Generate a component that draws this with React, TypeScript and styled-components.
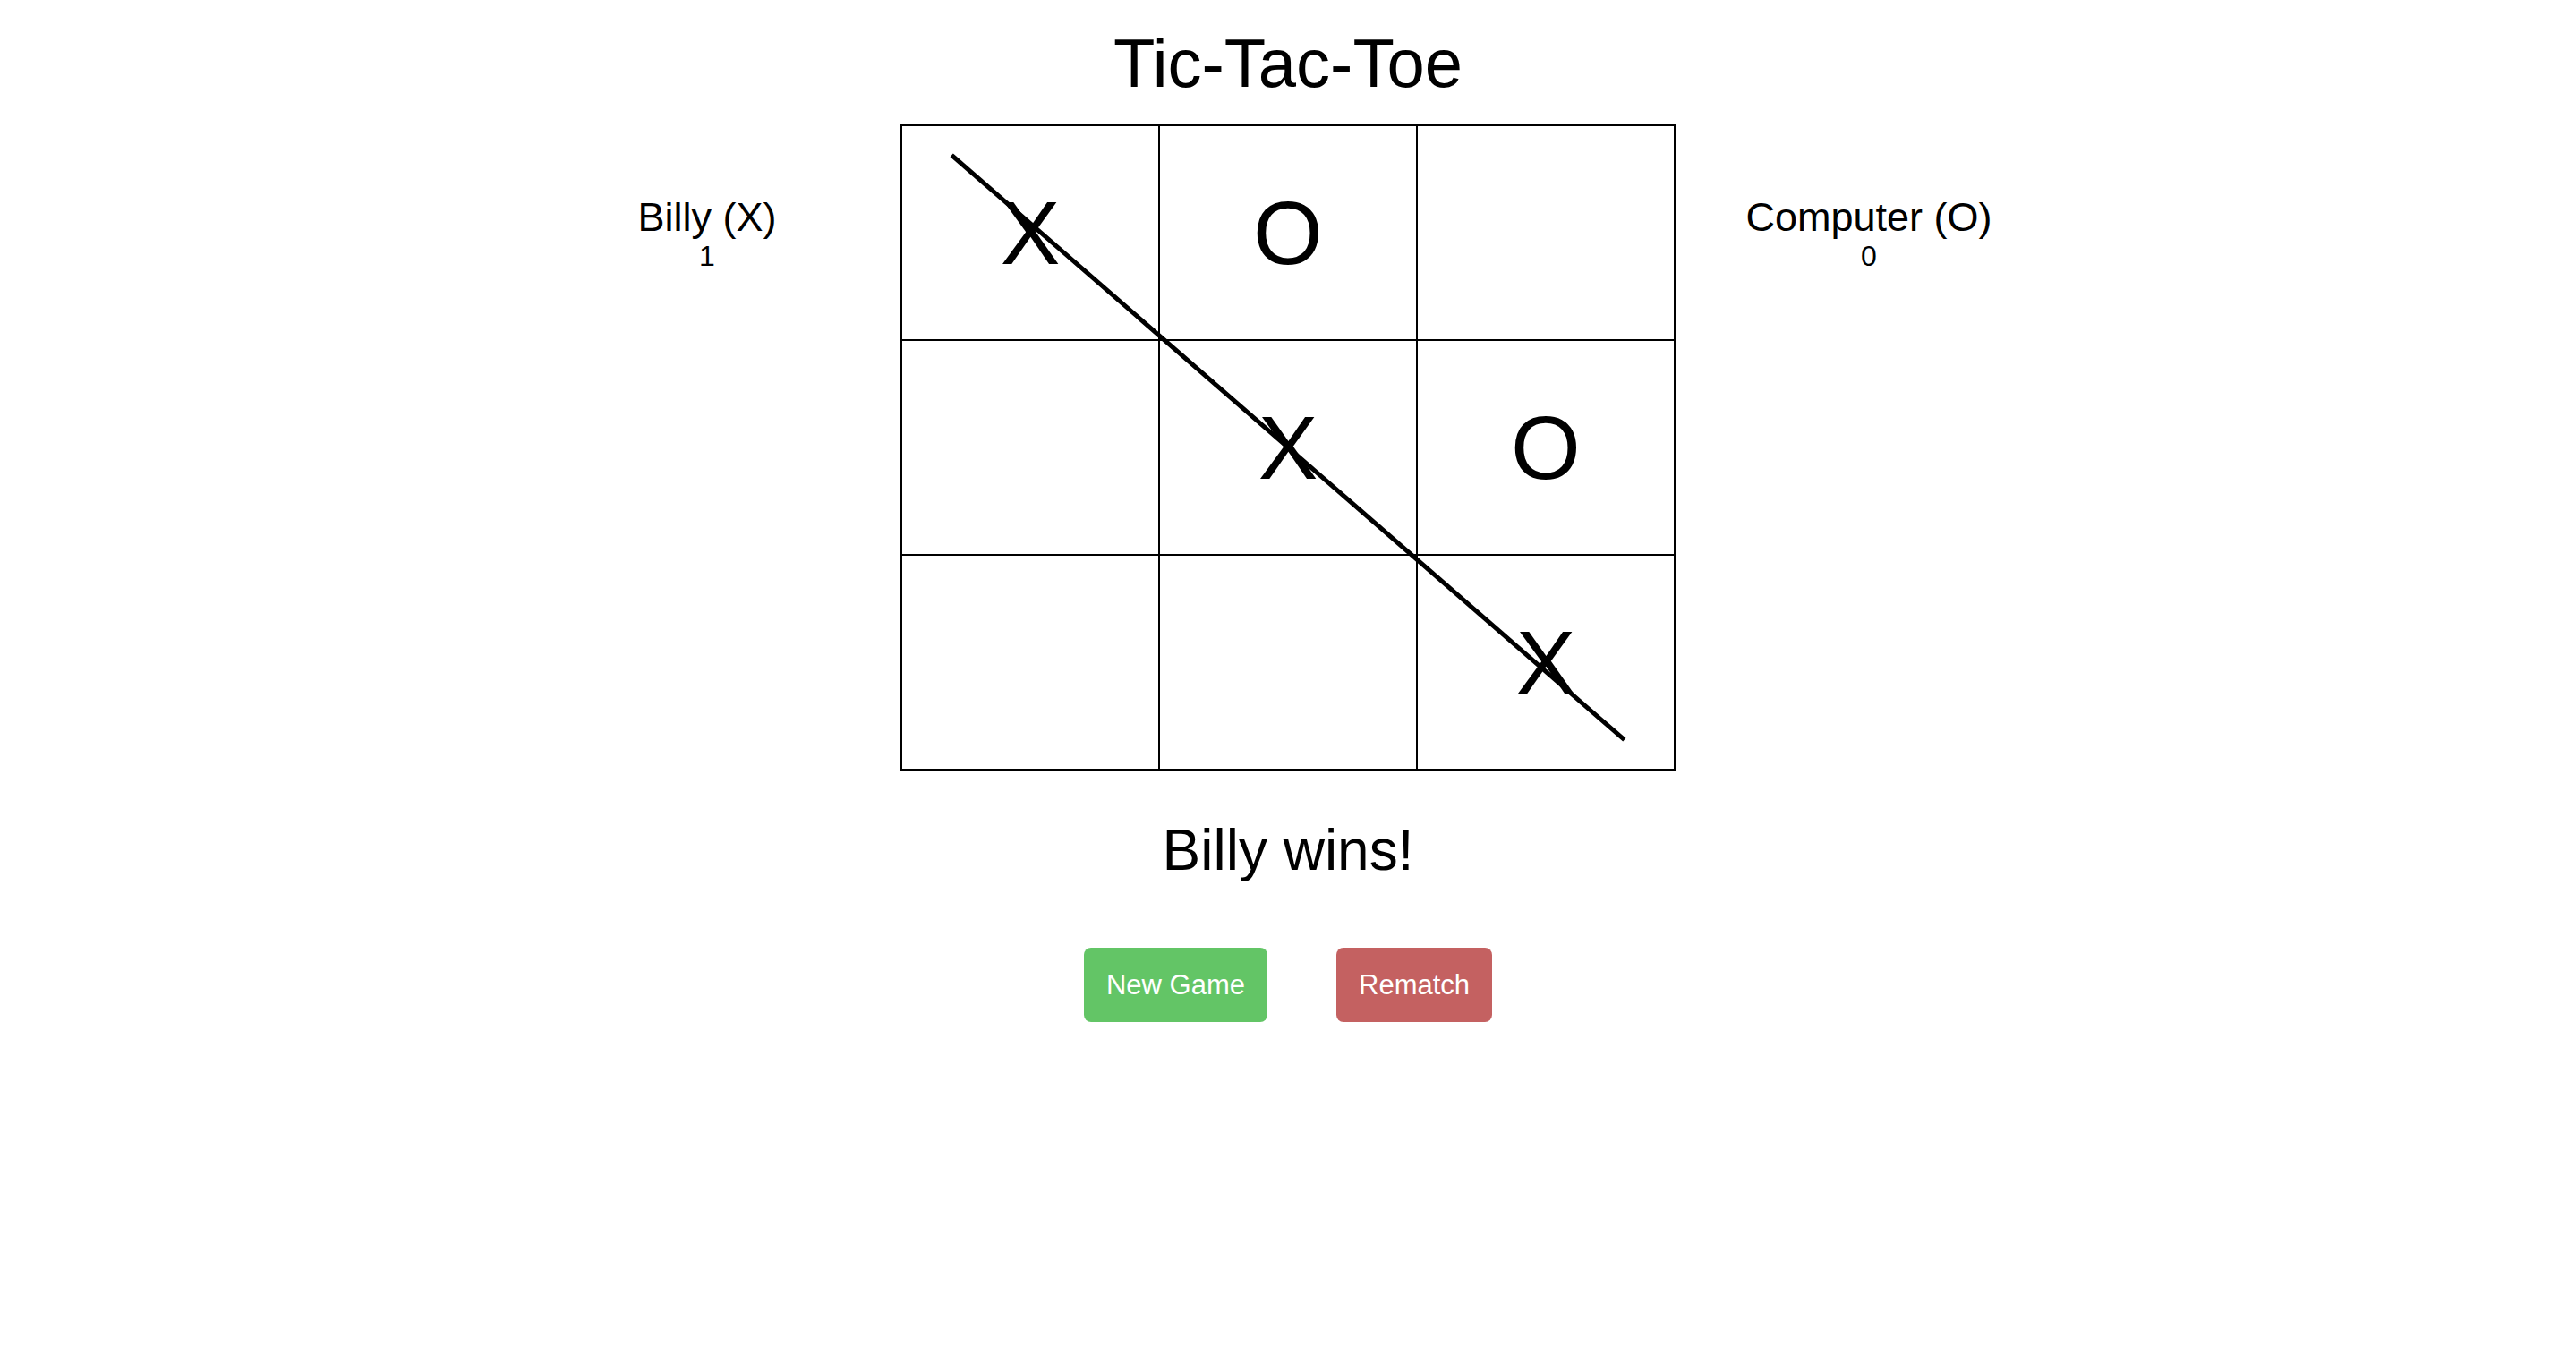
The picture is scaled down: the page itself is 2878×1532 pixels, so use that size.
import React from 'react'
import styled, { createGlobalStyle } from 'styled-components'

const GlobalStyle = createGlobalStyle`
  html, body {
    margin: 0;
    padding: 0;
    background: #fff;
    font-family: "Liberation Sans", Arial, Helvetica, sans-serif;
    color: #000;
  }
`

const Page = styled.main`
  display: flex;
  flex-direction: column;
  align-items: center;
  padding-top: 28px;
  min-height: 1532px;
  box-sizing: border-box;
`

const Title = styled.h1`
  margin: 0 0 25px;
  font-size: 76px;
  line-height: 86px;
  font-weight: 400;
`

const GameRow = styled.section`
  display: flex;
  align-items: flex-start;
  justify-content: center;
  gap: 66px;
`

const Player = styled.div`
  width: 300px;
  padding-top: 78px;
  display: flex;
  flex-direction: column;
  align-items: center;
`

const PlayerName = styled.div`
  font-size: 45px;
  line-height: 51px;
  white-space: nowrap;
`

const PlayerScore = styled.div`
  font-size: 32px;
  line-height: 37px;
`

const Board = styled.div`
  position: relative;
  display: grid;
  grid-template-columns: repeat(3, 288px);
  grid-template-rows: repeat(3, 240px);
  border: 1px solid #000;
`

const Cell = styled.div`
  box-sizing: border-box;
  border: 1px solid #000;
  display: flex;
  align-items: center;
  justify-content: center;
  font-size: 100px;
  line-height: 1;
`

const WinLine = styled.svg`
  position: absolute;
  inset: 0;
  width: 100%;
  height: 100%;
  pointer-events: none;
`

const Status = styled.h2`
  margin: 52px 0 0;
  font-size: 64px;
  line-height: 74px;
  font-weight: 400;
`

const Actions = styled.div`
  display: flex;
  gap: 77px;
  margin-top: 72px;
`

const Button = styled.button<{ $tone: 'green' | 'red' }>`
  height: 83px;
  padding: 0 25px;
  border: none;
  border-radius: 8px;
  font-family: "Liberation Sans", Arial, sans-serif;
  font-size: 31px;
  color: #fff;
  background-color: ${props => (props.$tone === 'green' ? '#63c566' : '#c46161')};
  cursor: pointer;
`

const cells = ['X', 'O', '', '', 'X', 'O', '', '', 'X']

const App = () => {
  return (
    <>
      <GlobalStyle />
      <Page>
        <Title>Tic-Tac-Toe</Title>
        <GameRow>
          <Player>
            <PlayerName>Billy (X)</PlayerName>
            <PlayerScore>1</PlayerScore>
          </Player>
          <Board>
            {cells.map((mark, i) => (
              <Cell key={i}>{mark}</Cell>
            ))}
            <WinLine viewBox="0 0 866 722">
              <line x1="58" y1="35" x2="808" y2="687" stroke="#000" strokeWidth="5" strokeLinecap="square" />
            </WinLine>
          </Board>
          <Player>
            <PlayerName>Computer (O)</PlayerName>
            <PlayerScore>0</PlayerScore>
          </Player>
        </GameRow>
        <Status>Billy wins!</Status>
        <Actions>
          <Button $tone="green">New Game</Button>
          <Button $tone="red">Rematch</Button>
        </Actions>
      </Page>
    </>
  )
}

export default App
